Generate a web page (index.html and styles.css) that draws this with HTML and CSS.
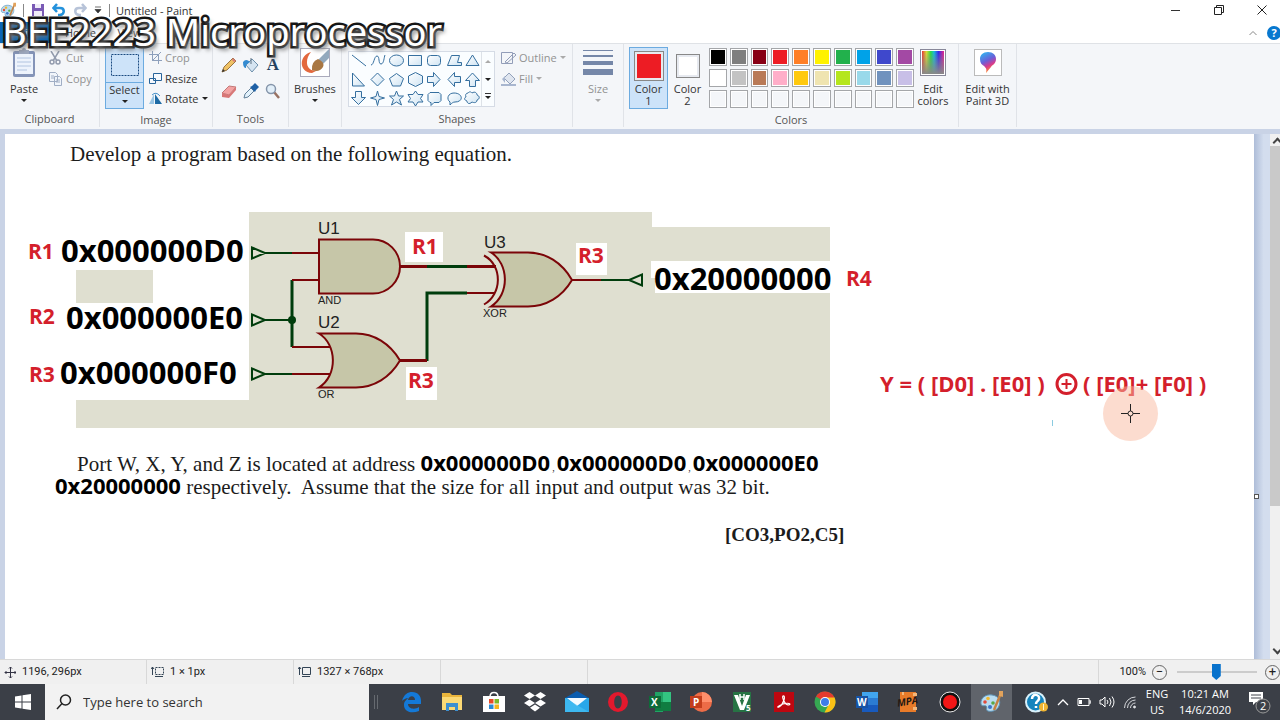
FILE: index.html
```html
<!DOCTYPE html>
<html lang="en">
<head>
<meta charset="utf-8">
<title>Untitled - Paint</title>
<link rel="stylesheet" href="styles.css">
</head>
<body>
<svg width="0" height="0" class="defs" aria-hidden="true">
  <defs>
    <linearGradient id="rainbow"><stop offset="0" stop-color="#e33"/><stop offset=".2" stop-color="#dd3"/><stop offset=".4" stop-color="#2d4"/><stop offset=".55" stop-color="#1bd"/><stop offset=".75" stop-color="#32e"/><stop offset="1" stop-color="#e28"/></linearGradient>
    <linearGradient id="shade" x2="0" y2="1"><stop offset="0" stop-color="#888" stop-opacity="0"/><stop offset="1" stop-color="#888"/></linearGradient>
    <linearGradient id="drop" x1="0" y1="0" x2=".4" y2="1"><stop offset="0" stop-color="#25c3f5"/><stop offset=".5" stop-color="#6a5fd8"/><stop offset=".75" stop-color="#d83a8e"/><stop offset="1" stop-color="#fb8c2c"/></linearGradient>
    <linearGradient id="shapeFill" x2="1" y2="1"><stop offset="0" stop-color="#fff"/><stop offset="1" stop-color="#cfe4f3"/></linearGradient>
    <symbol id="palette" viewBox="0 0 24 24"><path d="M2 14C1 8 7 4 13 5c7 1 9 6 7 11-2 5-8 6-11 5-3-1 0-4-2-5-2-1-4 1-5-2z" fill="#b9dcf0" stroke="#5d94b8"/><circle cx="6" cy="12" r="1.8" fill="#e34b3b"/><circle cx="9" cy="8.500" r="1.800" fill="#f2b72d"/><circle cx="11" cy="17" r="2" fill="#3d74c8"/><circle cx="14" cy="13" r="1.800" fill="#5aa845"/><path d="M22 3l-7 17" stroke="#c58243" stroke-width="2.500"/><path d="M20 1h4v6l-4-1z" fill="#e2a35c"/></symbol>
  </defs>
</svg>
<div class="app">
  <h1 class="caption">BEE2223 Microprocessor</h1>

  <header class="titlebar">
    <div class="quick">
      <svg width="16" height="16"><use href="#palette"/></svg>
      <i class="bar"></i>
      <svg width="14" height="14" viewBox="0 0 14 14"><path d="M1 1h12v12H1z" fill="#7a5ab5"/><path d="M4 1h6v4H4zM3 8h8v5H3z" fill="#f0ecf8"/></svg>
      <svg width="14" height="14" viewBox="0 0 14 14" fill="none" stroke="#2492dc" stroke-width="2.500"><path d="M2 5h6c5 0 5 6 0 7H6M5 1L1.500 5 5 9"/></svg>
      <svg width="14" height="14" viewBox="0 0 14 14" fill="none" stroke="#b7c3d8" stroke-width="2.500"><path d="M12 5H6c-5 0-5 6 0 7h2M9 1l3.500 4L9 9"/></svg>
      <svg width="8" height="8" viewBox="0 0 8 8"><path d="M1 1h6M1 3.500h6L4 7z" fill="#333" stroke="#333" stroke-width=".7"/></svg>
      <i class="bar"></i>
    </div>
    <span class="doc">Untitled - Paint</span>
    <div class="winctl">
      <button aria-label="Minimize"><svg width="10" height="12"><path d="M0 6.500h9" stroke="#333"/></svg></button>
      <button aria-label="Restore"><svg width="12" height="12" fill="none" stroke="#222"><path d="M1.500 3.500h7v7h-7zM3.500 3V1.500h7v7H9"/></svg></button>
      <button aria-label="Close"><svg width="12" height="12" stroke="#222"><path d="M1.500 1.500l9 9M10.500 1.500l-9 9"/></svg></button>
    </div>
  </header>
  <nav class="tabs">
    <button class="tab file">File</button><button class="tab home">Home</button><button class="tab">View</button>
    <div class="tabend">
      <svg width="10" height="8" fill="none" stroke="#888"><path d="M1.500 6L5 2.500 8.500 6"/></svg>
      <button class="help" aria-label="Help">?</button>
    </div>
  </nav>

  <section class="ribbon">
    <div class="group g-clip">
      <div class="body">
        <button class="big"><svg width="26" height="32" viewBox="0 0 26 32"><rect x="2" y="4" width="22" height="26" rx="2" fill="#8494b8"/><path d="M4 7h18v20H4z" fill="#edf3fc"/><path d="M6 11h14M6 15h14M6 19h14M6 23h10" stroke="#b1c4e0"/><path d="M8 3h3a2 2 0 0 1 4 0h3v4H8z" fill="#9ca7bd"/></svg><span>Paste</span><b class="dn"></b></button>
        <div class="stack dim">
          <button><svg width="15" height="14" fill="none" stroke="#929bad" stroke-width="1.500"><path d="M3 0l6 10M11 0L5 10"/><circle cx="4" cy="11" r="2"/><circle cx="10" cy="11" r="2"/></svg>Cut</button>
          <button><svg width="15" height="15" fill="#f1f5fb" stroke="#a0aec5"><path d="M1.500 1.500h6l2 2v7h-8zM6.500 5.500h5l2 2v7h-7z"/><path d="M3 5h3M3 7h3M8 9h4M8 11h4"/></svg>Copy</button>
        </div>
      </div>
      <h2>Clipboard</h2>
    </div>
    <div class="group g-image">
      <div class="body">
        <button class="select"><svg width="30" height="24"><rect x="1.500" y="1.500" width="27" height="21" fill="none" stroke="#1a4a80" stroke-dasharray="2 1"/></svg><span>Select</span><b class="dn"></b></button>
        <div class="stack">
          <button class="dim"><svg width="13" height="13" fill="none" stroke="#8ea0bc"><path d="M3.500 0v9.500H13M0 3.500h9.500V13M3 10l9-9"/></svg>Crop</button>
          <button><svg width="13" height="13" fill="#f5f9fe" stroke="#28649a"><path d="M4.500 1.500h8v7h-8zM.5 6.500h6v5h-6z"/></svg>Resize</button>
          <button><svg width="13" height="13"><path d="M5 2v10H0z" fill="#9ac6e5"/><path d="M6 2l7 10H6z" fill="#1e6ba5"/><path d="M3 3q4-4 8 1" fill="none" stroke="#4c94cb"/></svg>Rotate<b class="dn"></b></button>
        </div>
      </div>
      <h2>Image</h2>
    </div>
    <div class="group g-tools">
      <div class="body toolgrid">
        <button aria-label="Pencil"><svg width="16" height="16"><path d="M1 15l2-5L12 1l3 3-9 9z" fill="#efc265" stroke="#987442"/><path d="M1 15l1-3 2 2z" fill="#333"/><path d="M12 1l3 3-2 1-2-2z" fill="#d77c75"/></svg></button>
        <button aria-label="Fill with color"><svg width="16" height="16"><path d="M3 8l6-6 6 6-6 7z" fill="#d5e4f1" stroke="#6c8fab"/><path d="M0 5q3-4 7 0L3 8v3Q0 11 0 5z" fill="#348bd1"/><path d="M8 1v6" stroke="#5e7383"/></svg></button>
        <button class="letter">A</button>
        <button aria-label="Eraser"><svg width="16" height="16"><path d="M1 10l7-7 7 1-7 8z" fill="#f3a3a3" stroke="#c37979"/><path d="M1 10l7 2v3l-7-1zM8 12l7-8v3l-7 8z" fill="#d87676"/></svg></button>
        <button aria-label="Color picker"><svg width="16" height="16"><path d="M1 15l1-4 6-6 3 3-6 6z" fill="#e2f1fb" stroke="#607e98"/><path d="M7 4l2-1 3-3 4 4-3 3-1 2z" fill="#1e60a5"/></svg></button>
        <button aria-label="Magnifier"><svg width="16" height="16"><path d="M9 9l5 6" stroke="#997263" stroke-width="2.500"/><circle cx="6" cy="6" r="4.500" fill="#e2eff9" stroke="#8595aa" stroke-width="1.500"/></svg></button>
      </div>
      <h2>Tools</h2>
    </div>
    <div class="group g-brush">
      <div class="body">
        <button class="big"><svg width="30" height="32"><rect x=".5" y="1.500" width="29" height="28" fill="#fff" stroke="#aab"/><path d="M11 5C-1 8-2 25 12 26l6-3C6 26 4 13 11 5z" fill="#e3683d"/><path d="M29 2L18 13l4 5 7-7z" fill="#93a9bd"/><path d="M12 23q-1-8 6-11 7 3 5 8-4 6-11 3z" fill="#a97743"/></svg><span>Brushes</span><b class="dn"></b></button>
      </div>
    </div>
    <div class="group g-shapes">
      <div class="body">
        <div class="gallery">
          <svg width="132" height="55" viewBox="0 0 132 55" fill="url(#shapeFill)" stroke="#356f9f">
            <path d="M3 3l14 11"/><path d="M22 13c3 0 3-9 6-9s1 8 4 8 3-7 4-9" fill="none"/><ellipse cx="47.500" cy="8.500" rx="7" ry="5.500"/><path d="M59.500 3.500h13v10h-13z"/><rect x="78.500" y="3.500" width="13" height="10" rx="3"/><path d="M98.500 13.500l4-10h8l-2 7h4v3z"/><path d="M123.500 3l6.500 10.500h-13z"/>
            <path d="M3.500 21v13h12z"/><path d="M28.500 21l6.500 6.500-6.500 6.500-6.500-6.500z"/><path d="M47.500 21.500l7 5-3 7.500h-8l-3-7.500z"/><path d="M66.500 20.500l7 3.500v7l-7 3.500-7-3.500v-7z"/><path d="M78.500 24.500h6v-4l6.500 7-6.500 7v-4h-6z"/><path d="M111.500 24.500h-6v-4l-6.500 7 6.500 7v-4h6z"/><path d="M120.500 34.500v-6h-4l7-7.500 7 7.500h-4v6z"/>
            <path d="M6.500 39.500v6h-4l7 7 7-7h-4v-6z"/><path d="M28.500 39l1.500 5.500 5.500 1.500-5.500 1.500-1.500 6-1.500-6-5.500-1.500 5.500-1.500z"/><path d="M47.500 39l2 5h5l-4 3.500 2 5.500-5-3-5 3 2-5.500-4-3.500h5z"/><path d="M66.500 39l2.500 3.500h5l-2.500 4 2.500 3.500h-5l-2.500 4-2.500-4h-5l2.500-3.500-2.500-4h5z"/><path d="M81 40.500h9l2 2v6l-2 2h-5l-3 3v-3h-1l-2-2v-6z"/><path d="M101 53v-3c-4-3-2-9 4-9 9 0 10 9 1 9-2 0-3 1-5 3z"/><path d="M119 41c2-2 3-1 4 0 3-2 5 0 5 2 3 1 3 4 0 5 0 3-3 3-5 2-3 3-5 1-5-1-3-1-3-3-1-4-1-2 0-4 2-4z"/>
          </svg>
          <div class="gscroll"><b class="up"></b><b class="dn"></b><b class="dn more"></b></div>
        </div>
        <div class="stack dim">
          <button><svg width="15" height="14" fill="none" stroke="#929db8"><path d="M.5 1.500h11v11H.5zM4 11l9-9 2 2-9 8z"/></svg>Outline<b class="dn"></b></button>
          <button><svg width="15" height="15"><path d="M3 7l5-5 6 6-5 5z" fill="#dfe5ef" stroke="#92a1bb"/><path d="M0 13h15v2H0zM1 8l3-3v7z" fill="#a8b6cf"/></svg>Fill<b class="dn"></b></button>
        </div>
      </div>
      <h2>Shapes</h2>
    </div>
    <div class="group g-size">
      <div class="body">
        <button class="big dim"><svg width="30" height="32"><path d="M0 3.500h30" stroke="#7587a8"/><path d="M0 9h30" stroke="#7587a8" stroke-width="2"/><path d="M0 16h30" stroke="#7587a8" stroke-width="4"/><path d="M0 25h30" stroke="#7587a8" stroke-width="6"/></svg><span>Size</span><b class="dn"></b></button>
      </div>
    </div>
    <div class="group g-colors">
      <div class="body">
        <button class="color active"><i class="chip c-red"></i><span>Color<br>1</span></button>
        <button class="color second"><i class="chip c-white"></i><span>Color<br>2</span></button>
        <div class="swatches">
          <button class="k1" aria-label="Black"></button><button class="k2" aria-label="Gray"></button><button class="k3" aria-label="Dark red"></button><button class="k4" aria-label="Red"></button><button class="k5" aria-label="Orange"></button><button class="k6" aria-label="Yellow"></button><button class="k7" aria-label="Green"></button><button class="k8" aria-label="Turquoise"></button><button class="k9" aria-label="Indigo"></button><button class="k10" aria-label="Purple"></button>
          <button class="k11" aria-label="White"></button><button class="k12" aria-label="Light gray"></button><button class="k13" aria-label="Brown"></button><button class="k14" aria-label="Rose"></button><button class="k15" aria-label="Gold"></button><button class="k16" aria-label="Light yellow"></button><button class="k17" aria-label="Lime"></button><button class="k18" aria-label="Light turquoise"></button><button class="k19" aria-label="Blue gray"></button><button class="k20" aria-label="Lavender"></button>
          <button aria-label="Empty 1"></button><button aria-label="Empty 2"></button><button aria-label="Empty 3"></button><button aria-label="Empty 4"></button><button aria-label="Empty 5"></button><button aria-label="Empty 6"></button><button aria-label="Empty 7"></button><button aria-label="Empty 8"></button><button aria-label="Empty 9"></button><button aria-label="Empty 10"></button>
        </div>
        <button class="big edit"><svg width="28" height="32"><rect x="1.500" y="2.500" width="25" height="26" fill="#fff" stroke="#889"/><rect x="3" y="4" width="22" height="23" fill="url(#rainbow)"/><rect x="3" y="4" width="22" height="23" fill="url(#shade)"/></svg><span>Edit<br>colors</span></button>
      </div>
      <h2>Colors</h2>
    </div>
    <div class="group g-3d">
      <div class="body">
        <button class="big"><svg width="28" height="32"><rect x=".5" y="2.500" width="27" height="26" fill="#fff" stroke="#bbb"/><path d="M14 5c5 0 8 3 8 7 0 5-4 6-5 8l-5 6c1-4 0-5-2-7-2-1-4-3-4-7 0-4 3-7 8-7z" fill="url(#drop)"/></svg><span>Edit with<br>Paint 3D</span></button>
      </div>
    </div>
  </section>

  <main class="workspace">
    <div class="paper">
      <p class="intro">Develop a program based on the following equation.</p>
      <svg class="circuit" viewBox="5 170 1249 278" preserveAspectRatio="xMinYMin meet">
        <path d="M249 212H652V227H830V428H76V400H249zM76 270h77v33H76z" fill="#dfdfd0"/>
        <path d="M405 232h38v30h-38zM576 243h31v32h-31zM406 367h31v33h-31zM651 261h180v32H655V278h-4z" fill="#fff"/>
        <g fill="none" stroke="#003d0c" stroke-width="2">
          <path d="M252 247.500v11l13-5.500zM252 314.500v11l13-5.500zM252 368.500v11l13-5.500zM642 274.500v11l-13-5.500z"/>
          <path d="M265 253h27M265 320h27M265 374h27M601 280h28"/>
          <path d="M292 280v67M427 361v-68h40M427 266.500h40" stroke-width="3"/>
        </g>
        <circle cx="292" cy="320" r="4" fill="#003d0c"/>
        <g fill="none" stroke="#7b0508" stroke-width="2">
          <path d="M292 253h27M292 280h27M292 347h40M292 374h39M467 293h28M572 280h29"/>
          <path d="M400 266.500h27M467 266.500h29M400 360.500h27" stroke-width="3"/>
          <path d="M319 239.500h54a27 27 0 0 1 0 54h-54z" fill="#c6c6a8"/>
          <path d="M319 333.500h37c18 0 34 10 44 27-10 17-26 27-44 27h-37c19-12 18-43 0-54z" fill="#c6c6a8"/>
          <path d="M491 252.500h37c18 0 34 10 44 27.500-10 17-26 26.500-44 26.500h-37c19-12 18-43 0-54z" fill="#c6c6a8"/>
          <path d="M484 255.500c19 10 18 39 0 49"/>
        </g>
        <g class="gate"><text x="318" y="234">U1</text><text x="318" y="328">U2</text><text x="484" y="248">U3</text></g>
        <g class="kind"><text x="318" y="304">AND</text><text x="318" y="398">OR</text><text x="483" y="317">XOR</text></g>
        <g class="addr"><text x="61" y="262">0x000000D0</text><text x="66" y="329">0x000000E0</text><text x="60" y="384">0x000000F0</text><text x="654" y="290">0x20000000</text></g>
        <g class="reg"><text x="28" y="259">R1</text><text x="29" y="324">R2</text><text x="29" y="382">R3</text><text x="412" y="254">R1</text><text x="578" y="263">R3</text><text x="408" y="388">R3</text><text x="846" y="286">R4</text></g>
        <g class="eq"><text x="880" y="392">Y = ( [D0] . [E0] )</text><text x="1083" y="392">( [E0]+ [F0] )</text></g>
        <circle cx="1130.500" cy="413.500" r="27.500" fill="#f9b9a0" opacity=".5"/>
        <g fill="none" stroke="#d41f2c"><circle cx="1066.500" cy="384" r="9.500" stroke-width="3"/><path d="M1066.500 379v10M1061.500 384h10" stroke-width="2"/></g>
        <path d="M1052.500 420v6" stroke="#8bcbe0"/>
        <g stroke="#222" fill="none"><circle cx="1130.500" cy="413.500" r="2.500"/><path d="M1130.500 404v7M1130.500 416v7M1121 413.500h7M1133 413.500h7"/></g>
      </svg>
      <p class="ports"><span class="indent">Port W, X, Y, and Z is located at address </span><b>0x000000D0</b><small>,</small><b>0x000000D0</b><small>,</small><b>0x000000E0</b><br><b>0x20000000</b> respectively.&nbsp; Assume that the size for all input and output was 32 bit.</p>
      <p class="outcome">[CO3,PO2,C5]</p>
    </div>
    <div class="gutter"><i></i></div>
    <div class="vscroll"><b class="arrow"></b><i></i><b class="arrow down"></b></div>
  </main>

  <footer class="status">
    <div class="cell"><svg width="12" height="12" fill="none" stroke="#334"><path d="M6.500 1v11M1 6.500h11M5 2.500l1.500-1.500L8 2.500M5 10.500l1.500 1.500L8 10.500M2.500 5L1 6.500 2.500 8M10.500 5L12 6.500 10.500 8"/></svg>1196, 296px</div>
    <div class="cell"><svg width="13" height="12" fill="none" stroke="#345"><path d="M4.500 1.500h8v7h-8z" stroke-dasharray="2 1"/><path d="M1.500 9V1M0 3l1.500-2L3 3M4 10.500h8"/></svg>1 × 1px</div>
    <div class="cell"><svg width="13" height="12" fill="none" stroke="#345"><path d="M4.500 1.500h8v7h-8zM1.500 9V1M0 3l1.500-2L3 3M4 10.500h8"/></svg>1327 × 768px</div>
    <div class="cell"></div>
    <div class="zoom">
      <label for="zoom">100%</label>
      <button aria-label="Zoom out">−</button>
      <input type="range" id="zoom" min="0" max="100" value="49">
      <button aria-label="Zoom in">+</button>
    </div>
  </footer>

  <div class="taskbar">
    <button class="start" aria-label="Start"><svg width="16" height="16" fill="#fff"><path d="M0 2.500l6.500-1v6H0zM7.500 1.300L16 0v7.500H7.500zM0 8.500h6.500v6l-6.500-1zM7.500 8.500H16V16l-8.500-1.300z"/></svg></button>
    <div class="search">
      <svg width="18" height="18" fill="none" stroke="#222" stroke-width="1.500"><circle cx="10.500" cy="7" r="5"/><path d="M7 10.500L2 16"/></svg>
      <input type="text" aria-label="Search" placeholder="Type here to search">
    </div>
    <i class="grip"></i>
    <div class="apps">
      <button aria-label="Edge"><svg width="22" height="22"><path d="M2 10C4 3 8 1 12 1c6 0 9 4 9 9v3H8c0 5 7 6 11 3v4C12 23 4 21 4 14c0-4 3-6 5-7-4 0-6 2-7 3zm6-1h7c0-5-6-5-7 0z" fill="#1479d7"/></svg></button>
      <button aria-label="File Explorer"><svg width="22" height="22"><path d="M1 2h8l2 2h10v14H1z" fill="#eab53c"/><path d="M1 6h20v13H1z" fill="#fbd975"/><path d="M5 12h12v8h-3v-4H8v4H5z" fill="#3d8fd0"/></svg></button>
      <button aria-label="Store"><svg width="22" height="22"><path d="M7 6c0-6 8-6 8 0" fill="none" stroke="#fff" stroke-width="1.500"/><path d="M0 5h22v16H0z" fill="#fff"/><path d="M6 8h4.500v4.500H6z" fill="#e84a27"/><path d="M11.500 8H16v4.500h-4.500z" fill="#7db928"/><path d="M6 13.500h4.500V18H6z" fill="#2a8ad4"/><path d="M11.500 13.500H16V18h-4.500z" fill="#f5b51d"/></svg></button>
      <button aria-label="Dropbox"><svg width="22" height="22" fill="#fff"><path d="M5.500 1l5.500 3.500L5.500 8 0 4.500zM16.500 1L22 4.500 16.500 8 11 4.500zM5.500 8.500L11 12l-5.500 3.500L0 12zM16.500 8.500L22 12l-5.500 3.500L11 12zM11 13.500l5 3.200-5 3.800-5-3.800z"/></svg></button>
      <button aria-label="Mail"><svg width="24" height="22"><path d="M0 7L12 0l12 7v6H0z" fill="#0b5cad"/><path d="M0 7h24v14H0z" fill="#28a7ea"/><path d="M2 7h20l-10 8z" fill="#f3faff"/><path d="M0 7l24 14H0z" fill="#4bc3f4" opacity=".6"/></svg></button>
      <button aria-label="Opera"><svg width="22" height="22"><path d="M11 1a10 10 0 1 0 0 20 10 10 0 0 0 0-20zm0 3.500c5 0 5 13 0 13s-5-13 0-13z" fill="#e3192d"/></svg></button>
      <button aria-label="Excel"><svg width="24" height="22"><path d="M7 1h8v20H7z" fill="#21a366"/><path d="M15 1h8v10h-8z" fill="#33c481"/><path d="M7 11h16v9H7z" fill="#107c41"/><path d="M1 5h12v12H1z" fill="#0e6b38"/><text x="3" y="15">X</text></svg></button>
      <button aria-label="PowerPoint"><svg width="24" height="22"><circle cx="13" cy="11" r="10" fill="#ed6c47"/><path d="M13 1a10 10 0 0 1 10 10H13z" fill="#ff8f6b"/><path d="M1 5h12v12H1z" fill="#c43e1c"/><text x="4" y="15">P</text></svg></button>
      <button aria-label="uVision 5"><svg width="22" height="22"><path d="M2 1h18v20H2z" fill="#277344"/><path d="M3 4h4l4 11 4-11h4l-6 15H9z" fill="#fff"/><path d="M9 3v6M13 3v6M9 6h4" stroke="#fff" stroke-width="1.500"/><text class="five" x="15" y="20">5</text></svg></button>
      <button aria-label="Acrobat Reader"><svg width="22" height="22"><path d="M1 1h20v20H1z" fill="#bd0710"/><path d="M10 5c3-1 1 8-4 11-2 1-2-1 4-3 8-2 8 1 5 1-4-1-6-8-5-9z" fill="none" stroke="#fff" stroke-width="1.200"/></svg></button>
      <button aria-label="Chrome"><svg width="22" height="22"><circle cx="11" cy="11" r="10.500" fill="#36a852"/><path d="M11 11L2 5.500A10.500 10.500 0 0 1 20.500 6.500z" fill="#e33b2e"/><path d="M11 6.500h9.500A10.500 10.500 0 0 1 10.500 21.500L15 13z" fill="#fbc116"/><circle cx="11" cy="11" r="5" fill="#fff"/><circle cx="11" cy="11" r="4" fill="#3f7de8"/></svg></button>
      <button aria-label="Word"><svg width="24" height="22"><path d="M7 1h16v6H7z" fill="#41a5ee"/><path d="M7 7h16v7H7z" fill="#2b7cd3"/><path d="M7 14h16v7H7z" fill="#185abd"/><path d="M1 5h12v12H1z" fill="#1753a5"/><text x="2" y="15">W</text></svg></button>
      <button aria-label="MPA"><svg width="22" height="22"><path d="M3 1h16v20H3z" fill="#e87b29"/><path d="M5 1h2v3H5zM16 2h4v3h-4zM16 16h4v3h-4z" fill="#f3b77b"/><text class="mpa" x="0" y="14" transform="rotate(-10 11 11)">MPA</text></svg></button>
      <button aria-label="Recorder"><svg width="22" height="22"><circle cx="11" cy="11" r="10" fill="#111" stroke="#e8e8e8"/><circle cx="11" cy="11" r="7" fill="#f31616"/></svg></button>
      <button class="current" aria-label="Paint"><svg width="24" height="24"><use href="#palette"/></svg></button>
    </div>
    <div class="tray">
      <svg width="24" height="22"><circle cx="10.500" cy="11" r="9.500" fill="#1684bd" stroke="#d9f1fb" stroke-width="2"/><path d="M7 8c0-6 8-5 7 0-1 3-3 2-3 5M11 15v2" fill="none" stroke="#fff" stroke-width="2.500"/><circle cx="18.500" cy="16" r="4.500" fill="#f2b632"/><path d="M18.500 13v6" stroke="#fff5d0"/></svg>
      <svg width="12" height="10" fill="none" stroke="#fff" stroke-width="1.300"><path d="M1 8l5-5 5 5"/></svg>
      <svg width="14" height="12"><path d="M1 2.500h11v7H1zM12 5h2v2h-2" fill="none" stroke="#fff"/><path d="M2 4h3v4H2z" fill="#fff"/></svg>
      <svg width="16" height="14" fill="none" stroke="#fff"><path d="M1 5h2l3-3v10L3 9H1zM8 5q2 2 0 4M10.500 3q3 4 0 8M13 1.500q4 5.500 0 11"/></svg>
      <svg width="13" height="14" fill="none" stroke="#d5d7db"><path d="M1.500 13A11 11 0 0 1 12.500 2M4.500 13a8 8 0 0 1 8-8M7.500 13a5 5 0 0 1 5-5"/><circle cx="11.500" cy="12" r="1" fill="#fff"/></svg>
      <div class="lang">ENG<br>US</div>
      <time class="clock">10:21 AM<br>14/6/2020</time>
      <svg class="notes" width="24" height="24"><path d="M1 2h14v10H8l-3 3v-3H1z" fill="#fff"/><path d="M3 5h10M3 8h10" stroke="#40454d"/><circle cx="15" cy="16" r="7" fill="#3d4148" stroke="#999"/><text x="12" y="20">2</text></svg>
    </div>
  </div>
</div>
</body>
</html>
```
FILE: styles.css
```css
* { box-sizing: border-box; }
body { margin: 0; font: 11px/13px "Open Sans", "Noto Sans", sans-serif; color: #333; overflow: hidden; }
button { border: 0; padding: 0; background: none; font: inherit; color: inherit; }
h1, h2, p { margin: 0; font-weight: 400; }
svg { display: block; flex: none; }
.defs { position: absolute; }
.app { position: relative; height: 100vh; display: flex; flex-direction: column; background: #fff; }

.caption { position: absolute; z-index: 2; left: 2px; top: 10px; font: 38px/42px "Noto Sans", sans-serif; font-size: 38px; color: #fff; white-space: nowrap; -webkit-text-stroke: 5px #161616; paint-order: stroke fill; text-shadow: 3px 4px 4px #777; }

.titlebar { height: 22px; flex: none; display: flex; align-items: center; padding-bottom: 2px; }
.quick { display: flex; align-items: center; gap: 7px; }
.quick .bar { width: 1px; height: 13px; background: #888; }
.quick .bar:last-child { margin: 0 6px 0 0; }
.winctl { margin-left: auto; display: flex; }
.winctl button { width: 43px; height: 18px; display: grid; place-items: center; }
.winctl button:last-child { margin-right: -3px; }
.tabs { height: 21px; flex: none; display: flex; }
.tab { width: 49px; color: #444; }
.tab.file { width: 56px; background: #0a64b4; color: #fff; }
.tab.home { background: #f4f6f9; }
.tabend { margin: 0 -1px 0 auto; display: flex; align-items: center; gap: 9px; }
.help { width: 14px; height: 14px; border-radius: 50%; background: #0878cf; color: #fff; font-weight: 700; line-height: 14px; }

.ribbon { height: 86px; flex: none; display: flex; background: #f4f6f9; border-top: 1px solid #dfe2e6; }
.group { border-right: 1px solid #e0e3e8; margin-bottom: 2px; padding-top: 3px; display: flex; flex-direction: column; }
.group h2 { margin-top: 3px; font-size: 11px; line-height: 16px; text-align: center; color: #555; }
.body { height: 62px; display: flex; justify-content: center; }
.g-clip { width: 100px; }
.g-image { width: 113px; }
.g-tools { width: 76px; }
.g-brush { width: 53px; }
.g-shapes { width: 231px; }
.g-size { width: 51px; }
.g-colors { width: 335px; }
.g-3d { width: 58px; }
.big { display: flex; flex-direction: column; align-items: center; white-space: nowrap; }
.big span { margin-top: 4px; line-height: 12px; }
.stack { display: flex; flex-direction: column; }
.stack button { height: 21px; display: flex; align-items: center; gap: 3px; }
.dim { color: #929292; }
.dn { width: 0; height: 0; border: 3px solid transparent; border-top: 3px solid #222; border-bottom: 0; margin-top: 4px; }
.dim .dn { border-top-color: #aaa; }
.stack .dn { margin: 0; }
.g-clip .body { justify-content: flex-start; padding-left: 10px; gap: 10px; }
.g-image .body { justify-content: flex-start; padding-left: 5px; gap: 5px; }
.select { width: 39px; height: 62px; padding-top: 5px; display: flex; flex-direction: column; align-items: center; border: 1px solid #6cabe0; background: linear-gradient(#cde3f9 34px, #6cabe0 34px, #6cabe0 35px, #cde3f9 35px); }
.select span { margin-top: 6px; }
.toolgrid { display: grid; grid-template-columns: repeat(3, 22px); grid-template-rows: 26px 26px; padding: 5px 0 0 1px; }
.toolgrid button { display: grid; place-items: center; }
.toolgrid .letter { font: 700 17px "Liberation Serif", serif; color: #24405f; }
.g-shapes .body { justify-content: flex-start; padding: 4px 0 0 6px; gap: 6px; }
.gallery { height: 56px; width: 147px; display: flex; background: #fafdff; border: 1px solid #d5dbe5; }
.gscroll { width: 14px; display: flex; flex-direction: column; align-items: center; justify-content: space-around; border-left: 1px solid #dde2e8; }
.gscroll .dn { margin: 0; }
.up { border: 3px solid transparent; border-bottom-color: #aaa; border-top: 0; }
.more { box-shadow: 0 -2px 0 #f9fcff, 0 -3px 0 #333; }
.g-shapes .stack { margin-top: -4px; }
.g-colors .body { justify-content: flex-start; padding-left: 5px; }
.color { width: 39px; height: 62px; padding-top: 3px; display: flex; flex-direction: column; align-items: center; line-height: 12px; border: 1px solid transparent; }
.color.active { background: #cde3f9; border-color: #6cabe0; }
.color span { margin-top: 2px; }
.chip { width: 30px; height: 30px; border: 1px solid #888; box-shadow: inset 0 0 0 2px #e7eaf0; }
.second .chip { width: 24px; height: 24px; margin: 3px 0; }
.c-red { background: #ed1c24; }
.c-white { background: #fff; }
.swatches { width: 205px; display: grid; grid-template: repeat(3, 18px) / repeat(10, 1fr); gap: 3px; margin: 1px 0 0 2px; }
.swatches button { border: 1px solid #a4a6a9; box-shadow: inset 0 0 0 1px #fff; }
.edit { width: 38px; }
.k1 { background: #000; } .k2 { background: #7f7f7f; } .k3 { background: #880015; } .k4 { background: #ed1c24; } .k5 { background: #ff7f27; }
.k6 { background: #fff200; } .k7 { background: #22b14c; } .k8 { background: #00a2e8; } .k9 { background: #3f48cc; } .k10 { background: #a349a4; }
.k11 { background: #fff; } .k12 { background: #c3c3c3; } .k13 { background: #b97a57; } .k14 { background: #ffaec9; } .k15 { background: #ffc90e; }
.k16 { background: #efe4b0; } .k17 { background: #b5e61d; } .k18 { background: #99d9ea; } .k19 { background: #7092be; } .k20 { background: #c8bfe7; }

.workspace { flex: 1; min-height: 0; display: flex; background: #c9d3e6; padding: 5px 0 0 5px; }
.paper { flex: 1; min-width: 0; background: #fff; color: #1c1c1c; font: 21px/23px "Liberation Serif", serif; overflow: hidden; }
.intro { padding: 9px 0 4px 65px; }
.circuit { width: 100%; height: auto; }
.circuit text { font-family: "Open Sans", "Noto Sans", sans-serif; }
.circuit .gate text { font: 17px "Liberation Sans", sans-serif; fill: #222; }
.circuit .kind text { font: 11px "Liberation Sans", sans-serif; fill: #222; }
.addr { font-size: 31px; font-weight: 700; fill: #000; }
.reg { font-size: 21px; font-weight: 700; fill: #d41f2c; }
.eq { font-size: 22px; font-weight: 700; fill: #d41f2c; }
.ports { padding: 5px 0 0 50px; white-space: nowrap; }
.ports b { font: 700 22px/0 "Open Sans", "Noto Sans", sans-serif; color: #000; }
.ports small { font-size: 10px; line-height: 0; padding: 0 2px; }
.indent { padding-left: 22px; }
.outcome { padding: 24px 0 0 720px; font-size: 19px; font-weight: 700; }
.gutter { width: 16px; background: linear-gradient(90deg, #aebdd8, #d3ddee 60%); position: relative; }
.gutter i { position: absolute; left: 0; top: 360px; width: 5px; height: 5px; border: 1px solid #555; background: #fff; }
.vscroll { width: 10px; background: #f0f0f0; display: flex; flex-direction: column; overflow: hidden; }
.vscroll i { height: 360px; background: #c9c9c9; }
.arrow { width: 7px; height: 7px; margin: 5px 0 0 4px; border: solid #444; border-width: 2px 0 0 2px; rotate: 45deg; }
.arrow.down { rotate: 225deg; margin: auto 0 6px 4px; }

.status { height: 25px; flex: none; display: flex; background: #f0f0f0; border-top: 1px solid #d8d8d8; color: #222; font: 11px/24px Roboto, "Noto Sans", sans-serif; }
.cell { width: 147px; display: flex; align-items: center; gap: 6px; padding-left: 4px; border-right: 1px solid #d8d8d8; }
.zoom { margin-left: auto; padding-left: 20px; display: flex; align-items: center; gap: 6px; border-left: 1px solid #d8d8d8; }
.zoom button { width: 15px; height: 15px; border: 1px solid #666; border-radius: 50%; font-size: 13px; line-height: 12px; }
.zoom input { width: 80px; height: 18px; margin: 0 2px 0 4px; appearance: none; background: linear-gradient(#ccc, #ccc) center / 100% 2px no-repeat; }
.zoom input::-webkit-slider-thumb { appearance: none; width: 9px; height: 16px; background: #0872cc; clip-path: polygon(0 0, 100% 0, 100% 75%, 50% 100%, 0 75%); }

.taskbar { height: 36px; flex: none; display: flex; background: #3b3f47; color: #fff; }
.taskbar button { display: grid; place-items: center; }
.start { width: 45px; }
.search { width: 324px; display: flex; align-items: center; gap: 8px; padding-left: 10px; background: #f2f2f2; }
.search input { flex: 1; min-width: 0; border: 0; background: none; outline: 0; font: 13px "Open Sans", "Noto Sans", sans-serif; }
.search input::placeholder { color: #333; opacity: 1; }
.grip { width: 4px; height: 14px; margin: 11px 12px 0 5px; border: solid #666a70; border-width: 0 1px; }
.apps { flex: 1; display: grid; grid-template-columns: repeat(15, 1fr); }
.apps text { font: 700 10px "Open Sans", sans-serif; fill: #fff; }
.apps .five { font-size: 8px; }
.apps .mpa { font: italic 700 10px "Open Sans", sans-serif; fill: #251813; }
.current { background: #60646b; }
.tray { width: 268px; display: flex; align-items: center; gap: 8px; padding-left: 13px; font-size: 11px; line-height: 16px; text-align: center; }
.lang { width: 26px; }
.clock { width: 54px; white-space: nowrap; }
.notes { margin-left: auto; margin-right: 8px; }
.notes text { font: 11px "Open Sans", sans-serif; fill: #fff; }
```
